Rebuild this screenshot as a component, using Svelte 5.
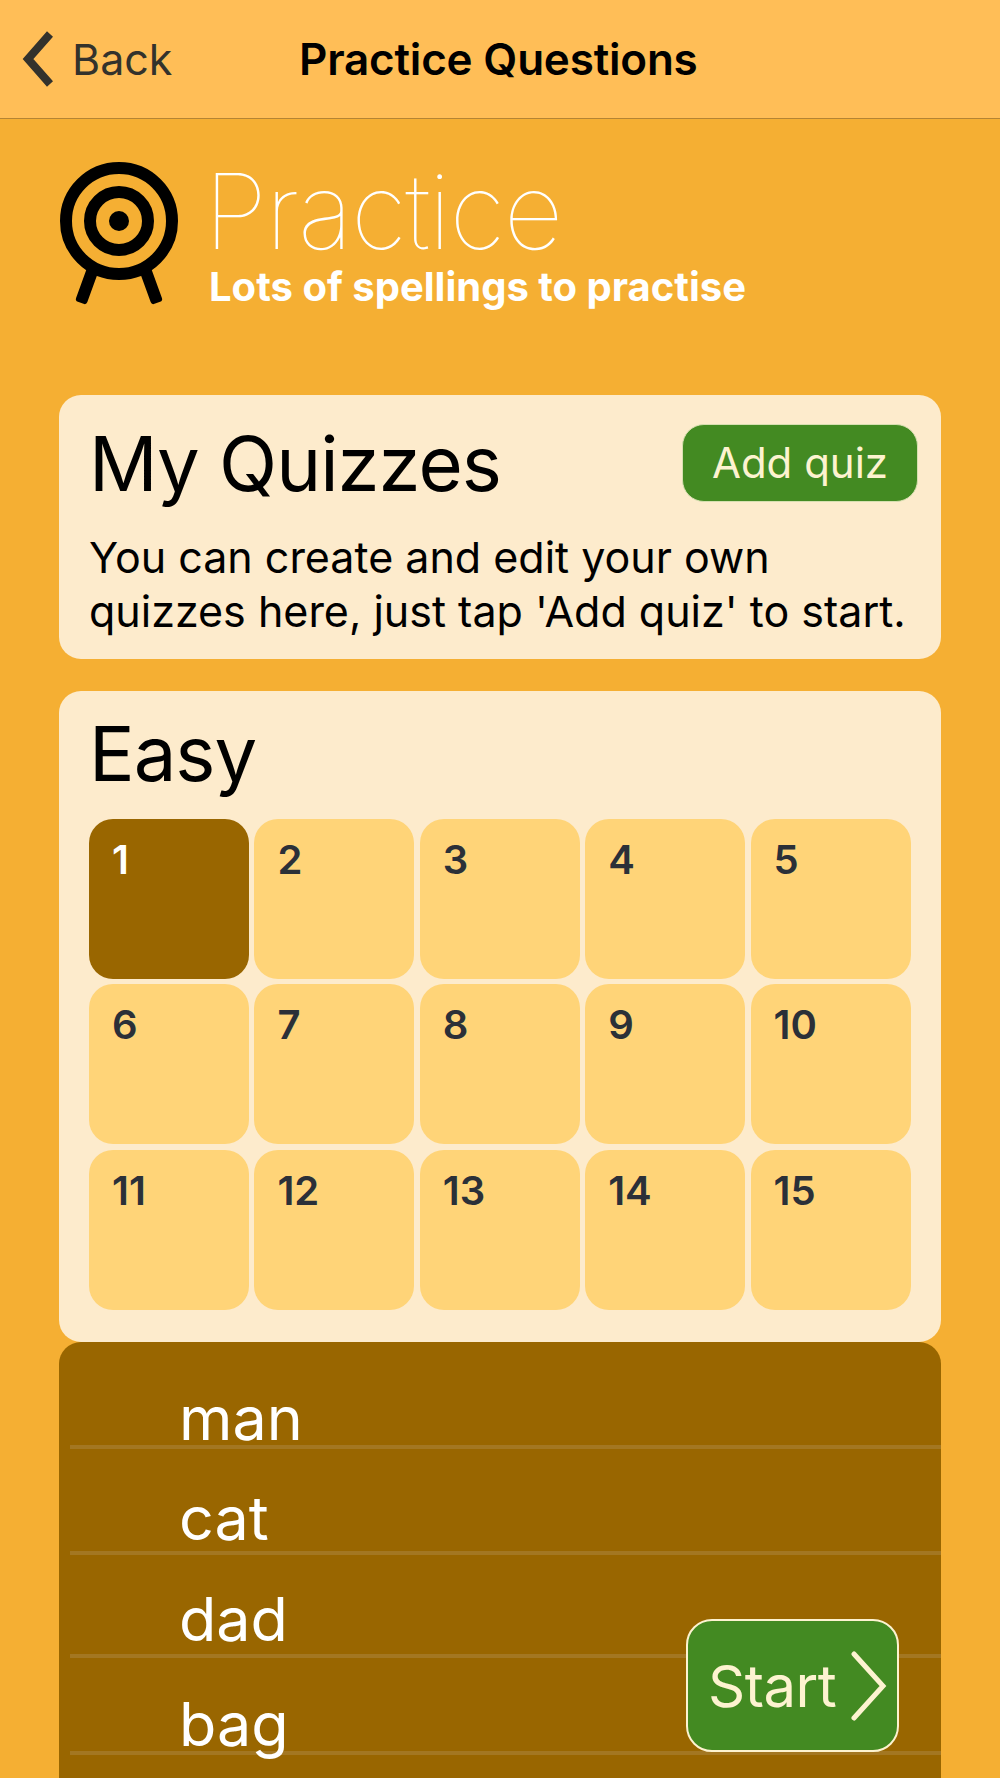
<script>
  const levels = Array.from({ length: 15 }, (_, i) => i + 1);
  const words = ['man', 'cat', 'dad', 'bag'];
  let selected = 1;
</script>

<div class="page">
  <header class="nav">
    <div class="back">
      <svg class="chevron" width="36" height="56" viewBox="0 0 36 56">
        <path d="M30 3 L8 28 L30 53" fill="none" stroke="#33322c" stroke-width="8" stroke-linecap="butt" stroke-linejoin="miter" />
      </svg>
      <span>Back</span>
    </div>
    <h1>Practice Questions</h1>
  </header>

  <section class="hero">
    <svg class="target" width="124" height="150" viewBox="0 0 124 150">
      <circle cx="62" cy="60" r="53" fill="none" stroke="#000" stroke-width="12" />
      <circle cx="62" cy="60" r="29" fill="none" stroke="#000" stroke-width="12" />
      <circle cx="62" cy="60" r="10" fill="#000" />
      <rect x="30" y="108" width="12" height="36" rx="3" transform="rotate(20 36 108)" />
      <rect x="82" y="108" width="12" height="36" rx="3" transform="rotate(-20 88 108)" />
    </svg>
    <div class="hero-text">
      <div class="title">Practice</div>
      <div class="subtitle">Lots of spellings to practise</div>
    </div>
  </section>

  <section class="card quizzes">
    <div class="quiz-head">
      <h2>My Quizzes</h2>
      <button class="add">Add quiz</button>
    </div>
    <p>You can create and edit your own quizzes here, just tap 'Add quiz' to start.</p>
  </section>

  <section class="card easy">
    <h2>Easy</h2>
    <div class="grid">
      {#each levels as n}
        <div class="tile" class:active={n === selected}>{n}</div>
      {/each}
    </div>
  </section>

  <section class="panel">
    {#each words as word}
      <div class="word">{word}</div>
    {/each}
    <button class="start">
      <span>Start</span>
      <svg width="36" height="70" viewBox="0 0 36 70">
        <path d="M3 3 L32 35 L3 67" fill="none" stroke="#fdf3d0" stroke-width="5" stroke-linecap="round" />
      </svg>
    </button>
  </section>
</div>

<style>
  :global(body) {
    margin: 0;
  }

  .page {
    width: 1000px;
    height: 1778px;
    overflow: hidden;
    background: #f5af33;
    font-family: Inter, "Liberation Sans", sans-serif;
  }

  .nav {
    height: 119px;
    box-sizing: border-box;
    background: #ffbe57;
    border-bottom: 1px solid #b58433;
    display: flex;
    align-items: center;
    padding: 0 0 0 20px;
  }

  .back {
    width: 279px;
    display: flex;
    align-items: center;
    gap: 16px;
    font-size: 43px;
    color: #33322c;
  }

  .chevron {
    flex-shrink: 0;
  }

  .nav h1 {
    margin: 0;
    font-size: 44px;
    font-weight: 600;
    color: #000;
    letter-spacing: -0.2px;
  }

  .hero {
    display: flex;
    gap: 28px;
    padding: 42px 0 0 57px;
    height: 234px;
    box-sizing: border-box;
  }

  .hero-text {
    display: flex;
    flex-direction: column;
  }

  .title {
    font-size: 104px;
    font-weight: 100;
    line-height: 100px;
    letter-spacing: -1.5px;
    color: #fff;
    margin-left: -5px;
  }

  .subtitle {
    font-size: 40px;
    font-weight: 700;
    line-height: 48px;
    color: #fff;
    margin-top: 2px;
  }

  .card {
    margin: 42px 59px 0;
    background: #fdebcc;
    border-radius: 22px;
    box-sizing: border-box;
    padding: 0 30px;
  }

  .card h2 {
    margin: 0;
    font-size: 76px;
    font-weight: 400;
    letter-spacing: -1px;
    color: #000;
  }

  .quizzes {
    height: 264px;
    padding-right: 23px;
  }

  .quiz-head {
    height: 135px;
    display: flex;
    justify-content: space-between;
    align-items: center;
  }

  .add {
    width: 236px;
    height: 78px;
    border: 1px solid #d6dfb0;
    border-radius: 22px;
    background: #438a22;
    color: #fdf3d0;
    font: 400 42px Inter, "Liberation Sans", sans-serif;
    padding: 0;
  }

  .quizzes p {
    margin: 0;
    font-size: 43px;
    line-height: 54px;
    color: #000;
  }

  .easy {
    height: 651px;
    margin-top: 32px;
  }

  .easy h2 {
    height: 128px;
    line-height: 124px;
  }

  .grid {
    display: grid;
    grid-template-columns: repeat(5, 160px);
    grid-auto-rows: 160px;
    gap: 5.4px;
  }

  .tile {
    background: #ffd478;
    border-radius: 24px;
    box-sizing: border-box;
    padding: 17px 23px;
    font-size: 40px;
    font-weight: 600;
    line-height: 48px;
    color: #2b3038;
  }

  .tile.active {
    background: #996600;
    color: #fff;
  }

  .panel {
    position: relative;
    margin: 0 59px;
    height: 460px;
    background: #996600;
    border-radius: 22px;
    box-sizing: border-box;
  }

  .word {
    height: 107px;
    margin-left: 11px;
    padding-left: 109px;
    box-sizing: border-box;
    border-bottom: 4px solid #a37722;
    display: flex;
    align-items: flex-end;
    font-size: 61px;
    line-height: 54px;
    color: #fff;
  }

  .word:nth-child(1) {
    height: 107px;
  }

  .word:nth-child(2) {
    height: 106px;
    padding-bottom: 6px;
  }

  .word:nth-child(3) {
    height: 103px;
    padding-bottom: 8px;
  }

  .word:nth-child(4) {
    height: 97px;
  }

  .start {
    position: absolute;
    left: 627px;
    top: 277px;
    width: 213px;
    height: 133px;
    box-sizing: border-box;
    border: 2px solid #fdf3d0;
    border-radius: 26px;
    background: #438a22;
    color: #fdf3d0;
    font: 400 58px Inter, "Liberation Sans", sans-serif;
    letter-spacing: -0.5px;
    display: flex;
    align-items: center;
    justify-content: space-between;
    padding: 0 10px 0 20px;
  }
</style>
